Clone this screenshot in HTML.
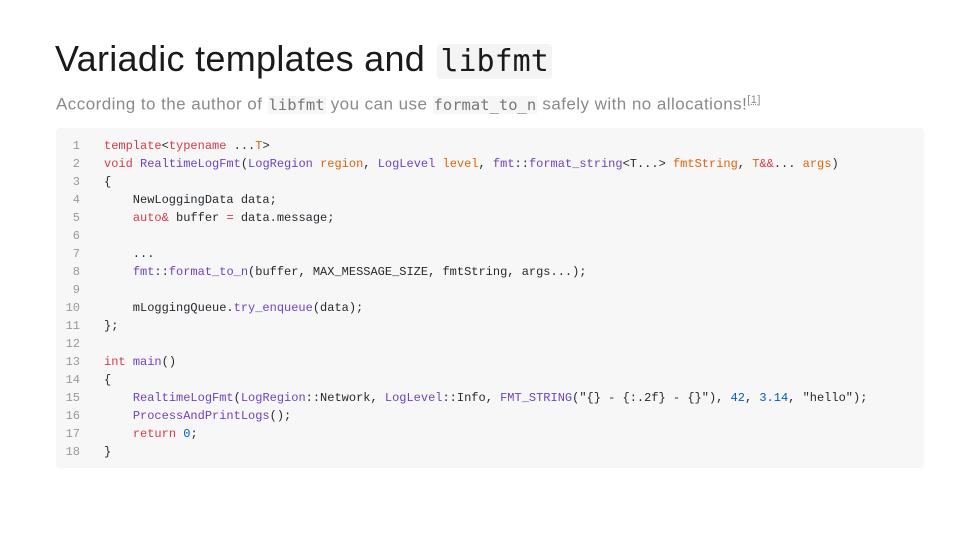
<!DOCTYPE html>
<html><head><meta charset="utf-8"><style>
body{margin:0;width:980px;height:552px;background:#fff;overflow:hidden;font-family:"Liberation Sans",sans-serif;}
h1{position:absolute;left:55px;top:36px;margin:0;font-weight:400;font-size:36px;color:#1a1a1a;letter-spacing:0.3px;line-height:46px}
h1 code{font-family:"DejaVu Sans Mono",monospace;font-size:30px;background:#f4f4f4;border-radius:4px;padding:0 3px;margin-left:2px;letter-spacing:0}
.sub{position:absolute;left:56px;top:88px;font-size:17px;color:#8a8a8a;line-height:24px;letter-spacing:0.45px}
.sub code{font-family:"DejaVu Sans Mono",monospace;font-size:15.5px;background:#f6f6f6;color:#777;padding:0 1px;letter-spacing:0}
.sub sup{font-size:11px;text-decoration:underline dotted}
.box{position:absolute;left:56px;top:128px;width:868px;height:340px;background:#f7f7f7;border-radius:4px}
pre{position:absolute;left:0;top:9px;margin:0;font-family:"Liberation Mono",monospace;font-size:12px;line-height:18px;color:#24292e}
.n{display:inline-block;width:24px;text-align:right;color:#999;margin-right:24px}
.k{color:#d73a49}.f{color:#6f42c1}.p{color:#e36209}.c{color:#005cc5}.s{color:#24292e}
</style></head><body>
<h1>Variadic templates and <code>libfmt</code></h1>
<div class="sub">According to the author of <code>libfmt</code> you can use <code>format_to_n</code> safely with no allocations!<sup>[1]</sup></div>
<div class="box"><pre><span class="n">1</span><span class="k">template</span>&lt;<span class="k">typename</span> ...<span class="p">T</span>&gt;
<span class="n">2</span><span class="k">void</span> <span class="f">RealtimeLogFmt</span>(<span class="f">LogRegion</span> <span class="p">region</span>, <span class="f">LogLevel</span> <span class="p">level</span>, <span class="f">fmt</span>::<span class="f">format_string</span>&lt;T...&gt; <span class="p">fmtString</span>, <span class="p">T</span><span class="k">&amp;&amp;</span>... <span class="p">args</span>)
<span class="n">3</span>{
<span class="n">4</span>    NewLoggingData data;
<span class="n">5</span>    <span class="k">auto&amp;</span> buffer <span class="k">=</span> data.message;
<span class="n">6</span>
<span class="n">7</span>    ...
<span class="n">8</span>    <span class="f">fmt</span>::<span class="f">format_to_n</span>(buffer, MAX_MESSAGE_SIZE, fmtString, args...);
<span class="n">9</span>
<span class="n">10</span>    mLoggingQueue.<span class="f">try_enqueue</span>(data);
<span class="n">11</span>};
<span class="n">12</span>
<span class="n">13</span><span class="k">int</span> <span class="f">main</span>()
<span class="n">14</span>{
<span class="n">15</span>    <span class="f">RealtimeLogFmt</span>(<span class="f">LogRegion</span>::Network, <span class="f">LogLevel</span>::Info, <span class="f">FMT_STRING</span>(<span class="s">"{} - {:.2f} - {}"</span>), <span class="c">42</span>, <span class="c">3.14</span>, <span class="s">"hello"</span>);
<span class="n">16</span>    <span class="f">ProcessAndPrintLogs</span>();
<span class="n">17</span>    <span class="k">return</span> <span class="c">0</span>;
<span class="n">18</span>}</pre></div>
</body></html>
